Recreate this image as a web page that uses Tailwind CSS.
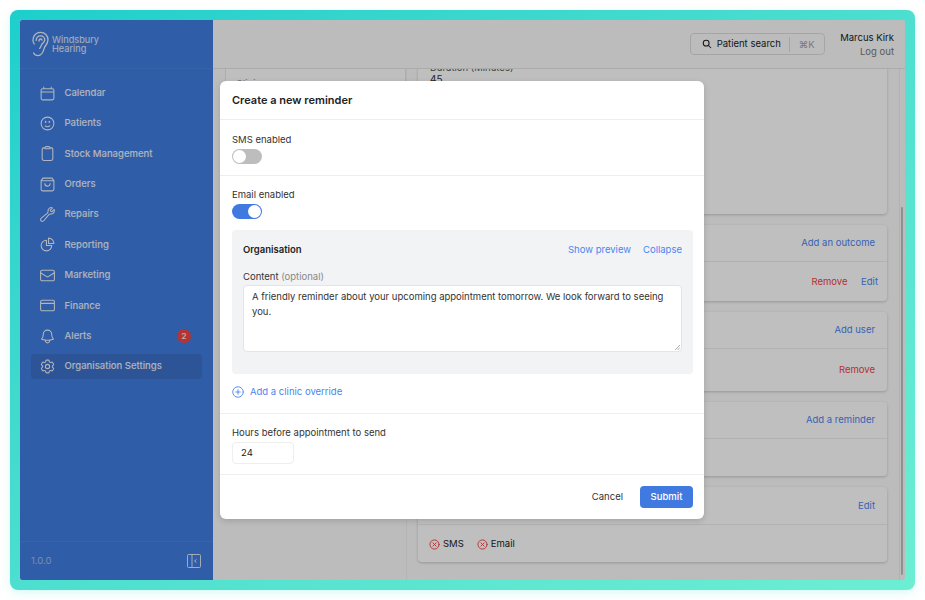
<!DOCTYPE html>
<html lang="en">
<head>
    <meta charset="UTF-8" />
    <title>Create a new reminder</title>
    <script src="https://cdn.jsdelivr.net/npm/@tailwindcss/browser@4"></script>
</head>
<body class="bg-white font-['Inter',sans-serif]">
    <div class="w-[925px] h-[600px] overflow-hidden pt-[10px] px-[10px]">
        <!-- teal frame -->
        <div class="w-[905px] h-[580px] p-[10px] rounded-[8px] bg-gradient-to-br from-[#1ccfcb] to-[#6ceed3] shadow-[0_3px_8px_rgba(100,238,210,0.25)]">
            <div class="relative flex w-[885px] h-[560px] overflow-hidden rounded-[2px] bg-[#fbfbfb] text-[9.5px] text-[#222]">

                <!-- sidebar -->
                <aside class="flex flex-col w-[193px] shrink-0 bg-[#417de0] text-white">
                    <div class="flex items-center gap-[2px] h-[49px] pl-[11px] border-b border-white/5">
                        <svg class="w-[19px] h-[26px]" viewBox="0 0 19 26" fill="none" stroke="currentColor" stroke-opacity="0.9" stroke-width="1.3" stroke-linecap="round">
                            <path d="M3.2 13C1.6 10.5 1.6 8.5 2.4 6.4C3.6 3.2 6.4 1.3 9.6 1.3C13.8 1.3 17 4.6 17 8.8C17 12.4 15 14 13.6 16.2C12.4 18.2 12.6 24.4 7 24.6C5 24.6 3.4 23.6 2.6 22" />
                            <path d="M5.2 9.4C5.2 6.6 7.2 4.8 9.6 4.8C12.1 4.8 13.8 6.8 13.8 9C13.8 11.2 11.6 12.2 10.6 13.6C9.8 14.8 10 16.4 8.6 17.4" />
                            <path d="M8 10C8 8.8 8.8 8 9.8 8C10.6 8 11 8.6 11 9.2" />
                        </svg>
                        <div class="text-[9.2px] leading-[9px] text-white/85">Windsbury<br />Hearing</div>
                    </div>

                    <nav class="flex flex-col gap-[5.4px] px-[11px] pt-[11.5px] font-medium text-white/90">
                        <a class="flex items-center gap-[8.5px] h-[25px] pl-[8px]">
                            <svg class="w-[17px] h-[17px] shrink-0" viewBox="0 0 24 24" fill="none" stroke="currentColor" stroke-width="1.5" stroke-linecap="round" stroke-linejoin="round"><path d="M6.75 3v2.25M17.25 3v2.25M3 18.75V7.5a2.25 2.25 0 0 1 2.25-2.25h13.5A2.25 2.25 0 0 1 21 7.5v11.25A2.25 2.25 0 0 1 18.75 21H5.25A2.25 2.25 0 0 1 3 18.75ZM3 9.75h18" /></svg>
                            Calendar
                        </a>
                        <a class="flex items-center gap-[8.5px] h-[25px] pl-[8px]">
                            <svg class="w-[17px] h-[17px] shrink-0" viewBox="0 0 24 24" fill="none" stroke="currentColor" stroke-width="1.5" stroke-linecap="round" stroke-linejoin="round"><path d="M15.182 15.182a4.5 4.5 0 0 1-6.364 0M21 12a9 9 0 1 1-18 0 9 9 0 0 1 18 0ZM9.75 9.75c0 .414-.168.75-.375.75S9 10.164 9 9.75 9.168 9 9.375 9s.375.336.375.75Zm5.25 0c0 .414-.168.75-.375.75s-.375-.336-.375-.75.168-.75.375-.75.375.336.375.75Z" /></svg>
                            Patients
                        </a>
                        <a class="flex items-center gap-[8.5px] h-[25px] pl-[8px]">
                            <svg class="w-[17px] h-[17px] shrink-0" viewBox="0 0 24 24" fill="none" stroke="currentColor" stroke-width="1.5" stroke-linecap="round" stroke-linejoin="round"><path d="M15.666 3.888A2.25 2.25 0 0 0 13.5 2.25h-3c-1.03 0-1.9.693-2.166 1.638m7.332 0c.055.194.084.4.084.612v0a.75.75 0 0 1-.75.75H9a.75.75 0 0 1-.75-.75v0c0-.212.03-.418.084-.612m7.332 0c.646.049 1.288.11 1.927.184 1.1.128 1.907 1.077 1.907 2.185V19.5a2.25 2.25 0 0 1-2.25 2.25H6.75A2.25 2.25 0 0 1 4.5 19.5V6.257c0-1.108.806-2.057 1.907-2.185a48.208 48.208 0 0 1 1.927-.184" /></svg>
                            Stock Management
                        </a>
                        <a class="flex items-center gap-[8.5px] h-[25px] pl-[8px]">
                            <svg class="w-[17px] h-[17px] shrink-0" viewBox="0 0 24 24" fill="none" stroke="currentColor" stroke-width="1.5" stroke-linecap="round" stroke-linejoin="round"><path d="M5.5 3h13L21 6.5v12.25A2.25 2.25 0 0 1 18.75 21H5.25A2.25 2.25 0 0 1 3 18.75V6.5L5.5 3ZM3 6.75h18M8.25 10.5a3.75 3.75 0 0 0 7.5 0" /></svg>
                            Orders
                        </a>
                        <a class="flex items-center gap-[8.5px] h-[25px] pl-[8px]">
                            <svg class="w-[17px] h-[17px] shrink-0" viewBox="0 0 24 24" fill="none" stroke="currentColor" stroke-width="1.5" stroke-linecap="round" stroke-linejoin="round"><path d="M21.75 6.75a4.5 4.5 0 0 1-4.884 4.484c-1.076-.091-2.264.071-2.95.904l-7.152 8.684a2.548 2.548 0 1 1-3.586-3.586l8.684-7.152c.833-.686.995-1.874.904-2.95a4.5 4.5 0 0 1 6.336-4.486l-3.276 3.276a3.004 3.004 0 0 0 2.25 2.25l3.276-3.276c.256.565.398 1.192.398 1.852Z" /></svg>
                            Repairs
                        </a>
                        <a class="flex items-center gap-[8.5px] h-[25px] pl-[8px]">
                            <svg class="w-[17px] h-[17px] shrink-0" viewBox="0 0 24 24" fill="none" stroke="currentColor" stroke-width="1.5" stroke-linecap="round" stroke-linejoin="round"><path d="M10.5 6a7.5 7.5 0 1 0 7.5 7.5h-7.5V6Z" /><path d="M13.5 10.5H21A7.5 7.5 0 0 0 13.5 3v7.5Z" /></svg>
                            Reporting
                        </a>
                        <a class="flex items-center gap-[8.5px] h-[25px] pl-[8px]">
                            <svg class="w-[17px] h-[17px] shrink-0" viewBox="0 0 24 24" fill="none" stroke="currentColor" stroke-width="1.5" stroke-linecap="round" stroke-linejoin="round"><path d="M21.75 6.75v10.5a2.25 2.25 0 0 1-2.25 2.25h-15a2.25 2.25 0 0 1-2.25-2.25V6.75m19.5 0A2.25 2.25 0 0 0 19.5 4.5h-15a2.25 2.25 0 0 0-2.25 2.25m19.5 0v.243a2.25 2.25 0 0 1-1.07 1.916l-7.5 4.615a2.25 2.25 0 0 1-2.36 0L3.32 8.91a2.25 2.25 0 0 1-1.07-1.916V6.75" /></svg>
                            Marketing
                        </a>
                        <a class="flex items-center gap-[8.5px] h-[25px] pl-[8px]">
                            <svg class="w-[17px] h-[17px] shrink-0" viewBox="0 0 24 24" fill="none" stroke="currentColor" stroke-width="1.5" stroke-linecap="round" stroke-linejoin="round"><path d="M2.25 9h19.5M4.5 19.5h15a2.25 2.25 0 0 0 2.25-2.25V6.75A2.25 2.25 0 0 0 19.5 4.5h-15a2.25 2.25 0 0 0-2.25 2.25v10.5A2.25 2.25 0 0 0 4.5 19.5Z" /></svg>
                            Finance
                        </a>
                        <a class="flex items-center gap-[8.5px] h-[25px] pl-[8px]">
                            <svg class="w-[17px] h-[17px] shrink-0" viewBox="0 0 24 24" fill="none" stroke="currentColor" stroke-width="1.5" stroke-linecap="round" stroke-linejoin="round"><path d="M14.857 17.082a23.848 23.848 0 0 0 5.454-1.31A8.967 8.967 0 0 1 18 9.75V9A6 6 0 0 0 6 9v.75a8.967 8.967 0 0 1-2.312 6.022c1.733.64 3.56 1.085 5.455 1.31m5.714 0a24.255 24.255 0 0 1-5.714 0m5.714 0a3 3 0 1 1-5.714 0" /></svg>
                            <span class="flex-1">Alerts</span>
                            <span class="flex items-center justify-center w-[14px] h-[14px] mr-[11px] rounded-full bg-[#f04444] text-[8px] font-semibold">2</span>
                        </a>
                        <a class="flex items-center gap-[8.5px] h-[25px] pl-[8px] rounded-[4px] bg-[#3b71ca]">
                            <svg class="w-[17px] h-[17px] shrink-0" viewBox="0 0 24 24" fill="none" stroke="currentColor" stroke-width="1.5" stroke-linecap="round" stroke-linejoin="round"><path d="M9.594 3.94c.09-.542.56-.94 1.11-.94h2.593c.55 0 1.02.398 1.11.94l.213 1.281c.063.374.313.686.645.87.074.04.147.083.22.127.325.196.72.257 1.075.124l1.217-.456a1.125 1.125 0 0 1 1.37.49l1.296 2.247a1.125 1.125 0 0 1-.26 1.431l-1.003.827c-.293.241-.438.613-.43.992a7.723 7.723 0 0 1 0 .255c-.008.378.137.75.43.991l1.004.827c.424.35.534.955.26 1.43l-1.298 2.247a1.125 1.125 0 0 1-1.369.491l-1.217-.456c-.355-.133-.75-.072-1.076.124a6.47 6.47 0 0 1-.22.128c-.331.183-.581.495-.644.869l-.213 1.281c-.09.543-.56.94-1.11.94h-2.594c-.55 0-1.019-.398-1.11-.94l-.213-1.281c-.062-.374-.312-.686-.644-.87a6.52 6.52 0 0 1-.22-.127c-.325-.196-.72-.257-1.076-.124l-1.217.456a1.125 1.125 0 0 1-1.369-.49l-1.297-2.247a1.125 1.125 0 0 1 .26-1.431l1.004-.827c.292-.24.437-.613.43-.991a6.932 6.932 0 0 1 0-.255c.007-.38-.138-.751-.43-.992l-1.004-.827a1.125 1.125 0 0 1-.26-1.43l1.297-2.247a1.125 1.125 0 0 1 1.37-.491l1.216.456c.356.133.751.072 1.076-.124.072-.044.146-.086.22-.128.332-.183.582-.495.644-.869l.214-1.28Z" /><path d="M15 12a3 3 0 1 1-6 0 3 3 0 0 1 6 0Z" /></svg>
                            Organisation Settings
                        </a>
                    </nav>

                    <div class="flex items-center justify-between h-[39px] mt-auto pl-[11px] pr-[12px] border-t border-white/5 text-white/50">
                        <span class="pt-[1px]">1.0.0</span>
                        <svg class="w-[14px] h-[14px]" viewBox="0 0 14 14" fill="none" stroke="white" stroke-opacity="0.8" stroke-width="1"><rect x="0.5" y="0.5" width="13" height="13" rx="1" /><path d="M5 .5v13M9.5 5.5l-2 1.5 2 1.5" /></svg>
                    </div>
                </aside>

                <!-- main -->
                <div class="flex flex-col flex-1 min-w-0">
                    <header class="flex items-center justify-end gap-[15px] h-[49px] shrink-0 pr-[11px] border-b border-[#e5e5e5]">
                        <div class="flex items-center h-[22px] w-[135px] pl-[11px] rounded-[4px] border border-[#ddd]">
                            <svg class="w-[10px] h-[10px] mr-[4.5px]" viewBox="0 0 24 24" fill="none" stroke="currentColor" stroke-width="2.5" stroke-linecap="round"><circle cx="10" cy="10" r="7" /><path d="M21 21l-6-6" /></svg>
                            <span>Patient search</span>
                            <span class="h-[15px] ml-[8px] pl-[9px] border-l border-[#ddd] leading-[15px] text-[#9ca3af]">⌘K</span>
                        </div>
                        <div class="pt-[1px] text-right leading-[14px]">
                            <div>Marcus Kirk</div>
                            <div class="text-[#777]">Log out</div>
                        </div>
                    </header>

                    <div class="flex flex-1 min-h-0 overflow-hidden">
                        <!-- left column -->
                        <div class="w-[194px] shrink-0 pl-[12px] border-r border-[#f0f0f0]">
                            <div class="h-[300px] -mt-[29px] pl-[10px] pt-[37px] bg-white border-l border-r border-[#e8e8e8] text-[#999]">Clinic</div>
                        </div>

                        <!-- right column -->
                        <div class="flex flex-col gap-[11px] w-[469px] ml-[11px] mr-[12px] shrink-0 -mt-[28px]">
                            <div class="h-[173px] shrink-0 pl-[12px] pt-[21px] bg-white rounded-[4px] shadow-[0_1px_3px_rgba(0,0,0,0.2)]">
                                <div class="text-[#555] leading-[11px]">Duration (Minutes)</div>
                                <div class="text-[10px] leading-[13px] text-[#333]">45</div>
                            </div>

                            <div class="h-[76px] shrink-0 bg-white rounded-[4px] shadow-[0_1px_3px_rgba(0,0,0,0.2)]">
                                <div class="flex items-center justify-end h-[37px] pt-[1px] pr-[12px] border-b border-[#eee] text-[#4a85f0]">Add an outcome</div>
                                <div class="flex items-center justify-end gap-[13.5px] h-[39px] pt-[1px] pr-[9px]">
                                    <span class="text-[#ef4444]">Remove</span>
                                    <span class="text-[#4a85f0]">Edit</span>
                                </div>
                            </div>

                            <div class="h-[79px] shrink-0 bg-white rounded-[4px] shadow-[0_1px_3px_rgba(0,0,0,0.2)]">
                                <div class="flex items-center justify-end h-[37px] pt-[1px] pr-[12px] border-b border-[#eee] text-[#4a85f0]">Add user</div>
                                <div class="flex items-center justify-end h-[42px] pt-[1px] pr-[12px] text-[#ef4444]">Remove</div>
                            </div>

                            <div class="h-[74px] shrink-0 bg-white rounded-[4px] shadow-[0_1px_3px_rgba(0,0,0,0.2)]">
                                <div class="flex items-center justify-end h-[37px] pt-[1px] pr-[12px] border-b border-[#eee] text-[#4a85f0]">Add a reminder</div>
                            </div>

                            <div class="h-[75px] shrink-0 bg-white rounded-[4px] shadow-[0_1px_3px_rgba(0,0,0,0.2)]">
                                <div class="flex items-center justify-end h-[38px] pt-[2px] pr-[12px] border-b border-[#eee] text-[#4a85f0]">Edit</div>
                                <div class="flex items-center gap-[3px] h-[37px] pt-[1px] pl-[11px]">
                                    <svg class="w-[11px] h-[11px]" viewBox="0 0 24 24" fill="none" stroke="#ef4444" stroke-width="2" stroke-linecap="round"><circle cx="12" cy="12" r="10" /><path d="M8.5 8.5l7 7M15.5 8.5l-7 7" /></svg>
                                    <span class="mr-[10px]">SMS</span>
                                    <svg class="w-[11px] h-[11px]" viewBox="0 0 24 24" fill="none" stroke="#ef4444" stroke-width="2" stroke-linecap="round"><circle cx="12" cy="12" r="10" /><path d="M8.5 8.5l7 7M15.5 8.5l-7 7" /></svg>
                                    <span>Email</span>
                                </div>
                            </div>
                        </div>

                        <!-- scrollbar -->
                        <div class="w-[6px] shrink-0 pt-[138px] pb-[5px] pl-[1px] pr-[2px] border-l border-[#eee]">
                            <div class="h-full rounded-full bg-[#c0c0c0]"></div>
                        </div>
                    </div>
                </div>

                <!-- modal overlay -->
                <div class="absolute inset-0 flex items-start justify-center pt-[61px] bg-black/25">
                    <div class="w-[484px] h-[438px] mr-[1px] rounded-[6px] bg-white shadow-[0_2px_6px_rgba(0,0,0,0.15)]">
                        <div class="flex items-center h-[39px] px-[12px] border-b border-[#eee] text-[11px] font-semibold text-[#222]">Create a new reminder</div>

                        <div class="h-[56px] px-[12px] pt-[13px] border-b border-[#eee]">
                            <div class="leading-[13px] text-[#333]">SMS enabled</div>
                            <div class="flex items-center w-[30px] h-[15px] mt-[3px] p-[1px] rounded-full bg-[#bdbdbd]">
                                <span class="w-[13px] h-[13px] rounded-full bg-white"></span>
                            </div>
                        </div>

                        <div class="pl-[12px] pr-[11px] pt-[12px]">
                            <div class="leading-[13px] text-[#333]">Email enabled</div>
                            <div class="flex items-center justify-end w-[30px] h-[15px] mt-[3px] p-[1px] rounded-full bg-[#4079e0]">
                                <span class="w-[13px] h-[13px] rounded-full bg-white"></span>
                            </div>

                            <div class="h-[144px] mt-[11px] px-[11px] pt-[13px] rounded-[4px] bg-[#f2f3f5]">
                                <div class="flex items-center justify-between h-[14px]">
                                    <span class="font-semibold text-[#222]">Organisation</span>
                                    <span class="flex gap-[12px] text-[#4a85f0]"><span>Show preview</span><span>Collapse</span></span>
                                </div>
                                <div class="mt-[13px] leading-[14px] text-[#333]">Content <span class="text-[#888]">(optional)</span></div>
                                <div class="relative h-[67px] mt-[1px] px-[8px] pt-[3px] rounded-[4px] border border-[#e4e4e4] bg-white leading-[15px] text-[#333]">
                                    A friendly reminder about your upcoming appointment tomorrow. We look forward to seeing you.
                                    <svg class="absolute right-[1px] bottom-[1px] w-[5px] h-[5px]" viewBox="0 0 5 5" stroke="#999" stroke-width="0.8"><path d="M0 5L5 0M2.5 5L5 2.5" /></svg>
                                </div>
                            </div>

                            <div class="flex items-center gap-[6px] h-[14px] mt-[11px] text-[#4a85f0]">
                                <svg class="w-[12px] h-[12px]" viewBox="0 0 24 24" fill="none" stroke="currentColor" stroke-width="1.8" stroke-linecap="round"><circle cx="12" cy="12" r="10.5" /><path d="M12 7.5v9M7.5 12h9" /></svg>
                                <span>Add a clinic override</span>
                            </div>
                        </div>

                        <div class="h-[62px] mt-[14px] px-[12px] pt-[12px] border-t border-b border-[#eee]">
                            <div class="leading-[13px] text-[#333]">Hours before appointment to send</div>
                            <div class="flex items-center w-[62px] h-[22px] mt-[3px] pl-[8px] rounded-[4px] border border-[#eee] text-[#222]">24</div>
                        </div>

                        <div class="flex items-center justify-end gap-[17px] h-[44px] pr-[11px]">
                            <span class="pt-[1px] text-[#333]">Cancel</span>
                            <span class="flex items-center justify-center w-[53px] h-[22px] pt-[1px] rounded-[4px] bg-[#4079e0] text-white font-medium">Submit</span>
                        </div>
                    </div>
                </div>

            </div>
        </div>
    </div>
</body>
</html>
